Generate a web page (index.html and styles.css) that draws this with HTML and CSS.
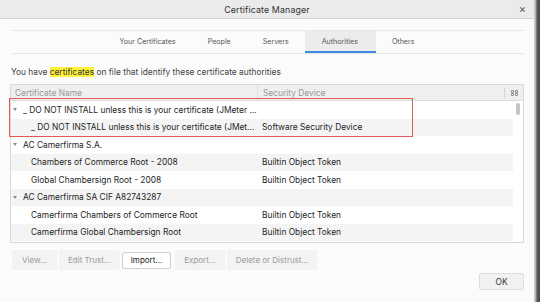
FILE: index.html
```html
<!DOCTYPE html>
<html>
<head>
<meta charset="utf-8">
<link rel="stylesheet" href="styles.css">
</head>
<body>
<div class="window">
  <div class="main">
    <div class="titlebar">
      <span></span>
      <span class="title">Certificate Manager</span>
      <span class="close">×</span>
    </div>
    <div class="tabs">
      <div class="tab">Your Certificates</div>
      <div class="tab">People</div>
      <div class="tab">Servers</div>
      <div class="tab active">Authorities</div>
      <div class="tab">Others</div>
    </div>
    <p class="desc">You have <mark>certificates</mark> on file that identify these certificate authorities</p>
    <div class="table">
      <div class="thead">
        <div class="th name">Certificate Name</div>
        <div class="th dev">Security Device</div>
        <div class="th pick"><svg width="7" height="6" viewBox="0 0 7 6"><path d="M0.5 0.5h2v2h-2zM4.5 0.5h2v2h-2zM0.5 3.5h2v2h-2zM4.5 3.5h2v2h-2z" fill="none" stroke="#888" stroke-width="0.9"/></svg></div>
      </div>
      <div class="tbody">
        <div class="rows">
          <div class="row"><span class="cell name l0"><i class="tri"></i>_ DO NOT INSTALL unless this is your certificate (JMeter ...</span></div>
          <div class="row alt"><span class="cell name l1">_ DO NOT INSTALL unless this is your certificate (JMet...</span><span class="cell dev">Software Security Device</span></div>
          <div class="row"><span class="cell name l0"><i class="tri"></i>AC Camerfirma S.A.</span></div>
          <div class="row alt"><span class="cell name l1">Chambers of Commerce Root - 2008</span><span class="cell dev">Builtin Object Token</span></div>
          <div class="row"><span class="cell name l1">Global Chambersign Root - 2008</span><span class="cell dev">Builtin Object Token</span></div>
          <div class="row alt"><span class="cell name l0"><i class="tri"></i>AC Camerfirma SA CIF A82743287</span></div>
          <div class="row"><span class="cell name l1">Camerfirma Chambers of Commerce Root</span><span class="cell dev">Builtin Object Token</span></div>
          <div class="row alt"><span class="cell name l1">Camerfirma Global Chambersign Root</span><span class="cell dev">Builtin Object Token</span></div>
        </div>
        <div class="scroll"><div class="thumb"></div></div>
      </div>
      <div class="highlight"></div>
    </div>
    <div class="actions">
      <button class="btn off">View...</button>
      <button class="btn off">Edit Trust...</button>
      <button class="btn on">Import...</button>
      <button class="btn off">Export...</button>
      <button class="btn off">Delete or Distrust...</button>
    </div>
    <div class="footer">
      <button class="btn ok">OK</button>
    </div>
  </div>
  <div class="edge"></div>
</div>
</body>
</html>
```
FILE: styles.css
```css
* { box-sizing: border-box; }
html, body { margin: 0; padding: 0; }
body {
  width: 540px;
  height: 302px;
  overflow: hidden;
  background: #fbfbfb;
  font-family: Inter, "Liberation Sans", sans-serif;
  color: #222;
}
.window { display: flex; height: 302px; }
.main { flex: 1; display: flex; flex-direction: column; }
.edge {
  width: 6px;
  background: linear-gradient(to right, #d0d0d0 0, #b0b0b0 30%, #5a5a5a 50%, #4a4a4a 100%);
}
.titlebar {
  height: 19px;
  background: #ebebeb;
  border-bottom: 1px solid #d4d4d4;
  display: grid;
  grid-template-columns: 1fr auto 1fr;
  align-items: center;
}
.title { font-size: 8.8px; color: #333; letter-spacing: 0.15px; }
.close { justify-self: end; margin-right: 8px; font-size: 11px; color: #555; line-height: 1; }
.tabs {
  margin: 11px 10px 0 12px;
  height: 24px;
  border-top: 1px solid #e9e9e9;
  border-bottom: 1px solid #e6e6e6;
  display: flex;
  justify-content: center;
  padding-right: 2px;
}
.tab {
  padding: 0 16px;
  font-size: 7.1px;
  color: #555;
  display: flex;
  align-items: center;
  border-bottom: 2px solid transparent;
}
.tab.active { background: #ececec; border-bottom-color: #3d8ae0; padding: 0 18px 0 17px; }
.desc {
  margin: 12px 0 0 11px;
  font-size: 8.4px;
  color: #444;
  line-height: 12px;
}
mark { background: #fff23a; color: #333; }
.table {
  position: relative;
  margin: 6px 10px 0 10px;
  height: 159px;
  border: 1px solid #d8d8d8;
  background: #fff;
  display: flex;
  flex-direction: column;
}
.thead {
  height: 16px;
  background: #efefef;
  border-bottom: 1px solid #dcdcdc;
  display: flex;
  align-items: center;
}
.th { font-size: 8.4px; color: #999; }
.th.name { width: 246px; padding-left: 4px; }
.th.dev { flex: 1; padding-left: 5px; border-left: 1px solid #e2e2e2; height: 100%; display: flex; align-items: center; }
.th.pick { width: 19px; height: 10px; border-left: 1px solid #d6d6d6; display: flex; justify-content: center; align-items: center; }
.tbody { flex: 1; display: flex; }
.rows { flex: 1; }
.row { height: 17.5px; display: flex; align-items: center; font-size: 8.4px; color: #1e1e1e; }
.row.alt { background: #f4f4f4; }
.cell.name { width: 251px; display: flex; align-items: center; white-space: nowrap; }
.cell.l0 { padding-left: 2px; }
.cell.l1 { padding-left: 20px; }
.cell.dev { white-space: nowrap; }
.tri {
  width: 0; height: 0;
  border-left: 2.5px solid transparent;
  border-right: 2.5px solid transparent;
  border-top: 3.5px solid #888;
  margin-right: 6px;
}
.scroll { width: 10px; position: relative; background: #fff; }
.thumb { margin: 2px 0 0 3px; width: 4px; height: 12px; border-radius: 2px; background: #c4c4c4; }
.highlight {
  position: absolute;
  left: -2px;
  top: 13px;
  width: 404px;
  height: 39px;
  border: 1.5px solid #e05a5a;
}
.actions { display: flex; gap: 2px; margin: 7px 0 0 12px; }
.btn {
  font-family: inherit;
  font-size: 8px;
  height: 20px;
  padding: 0 8px;
  border-radius: 2px;
  min-width: 45px;
}
.btn.off { background: #f3f3f3; border: 1px solid #f3f3f3; color: #9a9a9a; }
.btn.on { background: #fff; border: 1px solid #cfcfcf; color: #222; margin: 0 2px 0 0; height: 17px; align-self: center; padding: 0 8px; }
.footer { display: flex; justify-content: flex-end; margin: 3px 10px 0 0; }
.btn.ok { width: 43px; height: 17px; background: #f1f1f1; border: 1px solid #dedede; color: #333; font-size: 8.4px; }
```
